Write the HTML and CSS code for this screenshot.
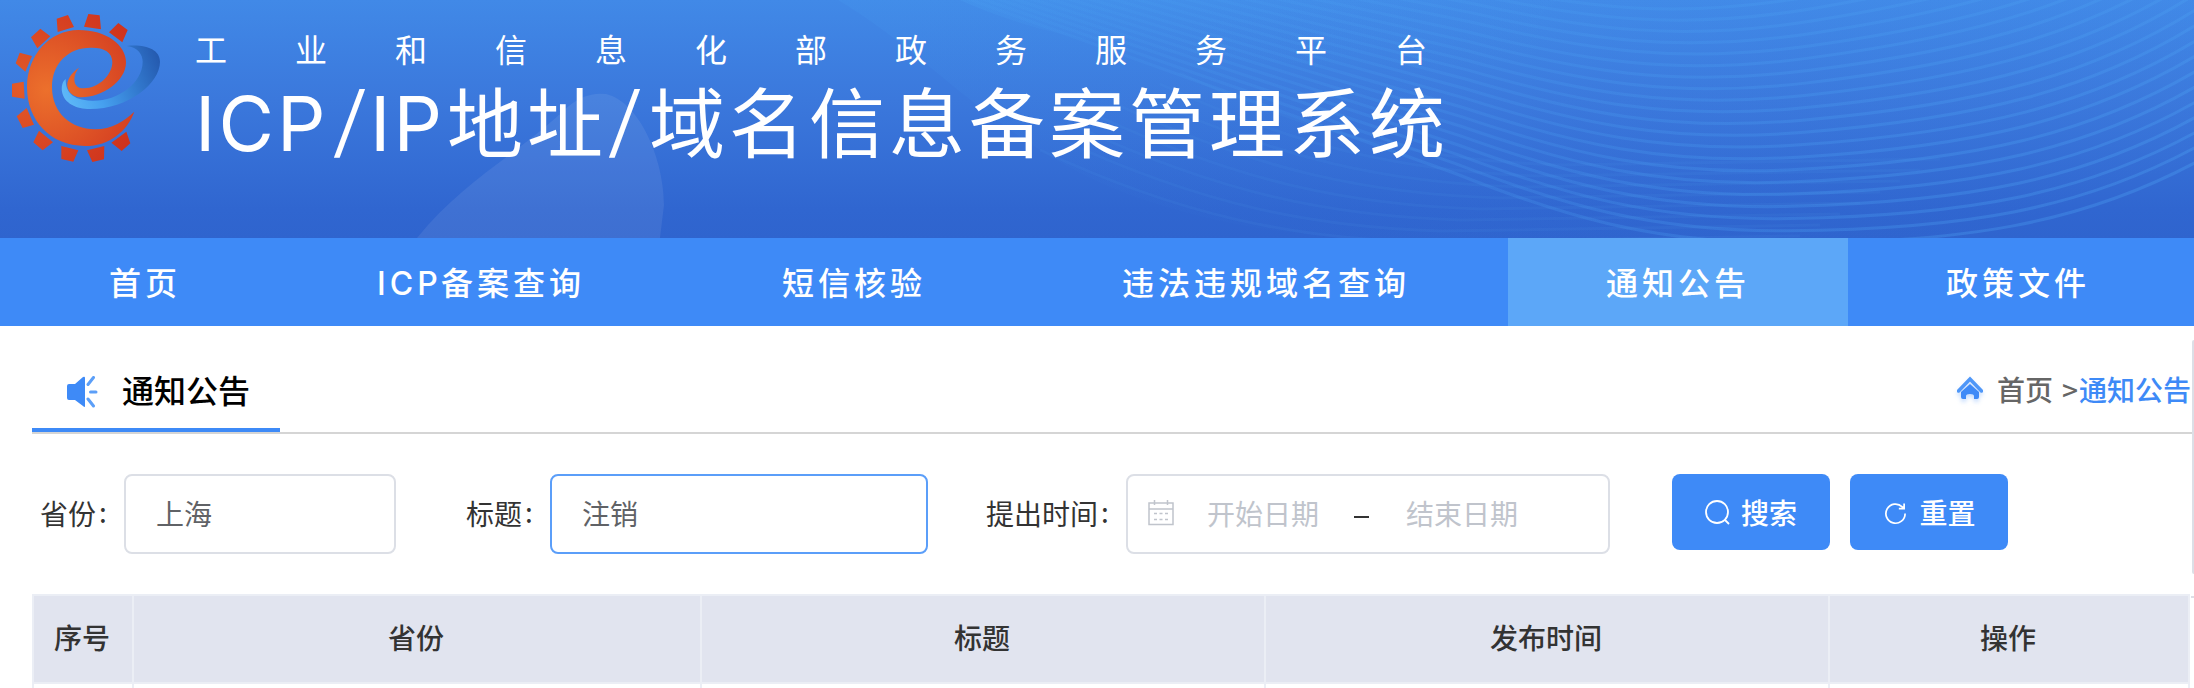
FILE: index.html
```html
<!DOCTYPE html>
<html lang="zh-CN">
<head>
<meta charset="utf-8">
<title>ICP/IP地址/域名信息备案管理系统</title>
<link rel="stylesheet" href="styles.css">
</head>
<body>
<header class="banner">
  <svg class="banner-art" viewBox="0 0 2194 238" preserveAspectRatio="none" aria-hidden="true">
    <defs>
      <linearGradient id="fade" gradientUnits="userSpaceOnUse" x1="940" y1="0" x2="2194" y2="0">
        <stop offset="0" stop-color="#4aa0f2" stop-opacity=".12"/>
        <stop offset=".4" stop-color="#4aa0f2" stop-opacity=".22"/>
        <stop offset="1" stop-color="#4a9cf0" stop-opacity=".38"/>
      </linearGradient>
      <linearGradient id="haze" x1="0" y1="0" x2="1" y2="1">
        <stop offset="0" stop-color="#4aa8f5" stop-opacity=".45"/>
        <stop offset=".45" stop-color="#4aa0f2" stop-opacity=".08"/>
        <stop offset="1" stop-color="#4aa0f2" stop-opacity="0"/>
      </linearGradient>
      <path id="w0" d="M960 -4C1110 50 1290 115 1454 173C1560 215 1650 243 1785 243C1960 243 2080 225 2200 160" fill="none" stroke="url(#fade)" stroke-width="3"/>
      <g id="w1"><use href="#w0"/><use href="#w0" transform="translate(0 -5) rotate(-.5 960 0)"/></g>
      <g id="w2"><use href="#w1"/><use href="#w1" transform="translate(0 -10) rotate(-1 960 0)"/></g>
      <g id="w3"><use href="#w2"/><use href="#w2" transform="translate(0 -20) rotate(-2 960 0)"/></g>
      <g id="w4"><use href="#w3"/><use href="#w3" transform="translate(0 -40) rotate(-4 960 0)"/></g>
      <path id="v0" d="M1040 150C1180 215 1290 238 1420 242L1800 236" fill="none" stroke="#4a9cf0" stroke-opacity=".1" stroke-width="3"/>
      <g id="v1"><use href="#v0"/><use href="#v0" transform="translate(20 -11)"/></g>
      <g id="v2"><use href="#v1"/><use href="#v1" transform="translate(40 -22)"/></g>
    </defs>
    <path d="M417 238C462 182 520 152 562 112Q583 91 606 94C640 102 664 160 664 205L660 238Z" fill="#fff" fill-opacity=".075"/>
    <path d="M838 0C940 60 1010 160 1160 205C1260 235 1330 240 1500 240L1960 240L2194 160V0Z" fill="url(#haze)" opacity=".3"/>
    <path d="M960 0C1060 45 1180 62 1454 70C1600 60 1500 30 1560 0Z" fill="url(#haze)" opacity=".45"/>
    <use href="#v2"/>
    <use href="#v2" transform="translate(80 -44)"/>
    <use href="#w4"/>
    <use href="#w4" transform="translate(0 -80) rotate(-8 960 0)"/>
  </svg>
  <svg class="logo" viewBox="0 0 540 540" aria-label="logo">
    <defs>
      <radialGradient id="orange" gradientUnits="userSpaceOnUse" cx="140" cy="270" r="300">
        <stop offset="0" stop-color="#ec702c"/><stop offset="1" stop-color="#d33c21"/>
      </radialGradient>
      <linearGradient id="blue" gradientUnits="userSpaceOnUse" x1="185" y1="300" x2="480" y2="190">
        <stop offset="0" stop-color="#60baf8"/><stop offset=".35" stop-color="#46a0ef"/><stop offset=".7" stop-color="#337bd0"/><stop offset="1" stop-color="#255bb0"/>
      </linearGradient>
      <radialGradient id="teeth" gradientUnits="userSpaceOnUse" cx="60" cy="260" r="360">
        <stop offset="0" stop-color="#e25a28"/><stop offset="1" stop-color="#cf331d"/>
      </radialGradient>
    </defs>
    <path fill="url(#blue)" d="M197 237C186 245 184 262 186 275C192 310 230 327 270 327C385 327 480 250 480 185C480 145 430 132 380 138C415 142 428 165 428 185C428 250 350 305 275 302C215 300 197 275 197 237Z"/>
    <path fill="url(#orange)" d="M403 335C382 392 330 438 255 438C150 438 81 360 81 262C81 165 150 90 235 90C320 90 378 135 378 187C378 245 305 292 245 292C210 292 195 262 205 240C211 224 224 211 238 203C218 222 215 264 250 265C295 266 337 225 337 187C337 155 310 142 272 143C205 143 156 190 156 262C156 340 215 388 285 388C335 388 375 362 403 335Z"/>
    <path fill="url(#teeth)" d="M170 56L204 45L222 81L173 96ZM265 42L299 46L303 88L252 80ZM355 69L383 90L367 127L327 97ZM121 86L151 109L112 145L93 112ZM59 158L96 168L76 215L47 190ZM36 251L71 245L74 296L36 290ZM80 324L102 374L68 384L50 349ZM117 392L159 427L128 451L100 427ZM184 438L235 451L220 485L184 477ZM313 438L312 478L277 486L261 451ZM379 395L391 430L365 453L334 428Z"/>
  </svg>
  <div class="titles">
    <p class="ministry">工业和信息化部政务服务平台</p>
    <h1 class="system"><span class="latin latin-icp">ICP</span><span class="slash">/</span><span class="latin latin-ip">IP</span><span class="han">地址</span><span class="slash slash-wide">/</span><span class="han">域名信息备案管理系统</span></h1>
  </div>
</header>

<nav class="nav">
  <a class="nav-item">首页</a>
  <a class="nav-item nav-icp"><span class="nav-latin">ICP</span>备案查询</a>
  <a class="nav-item">短信核验</a>
  <a class="nav-item">违法违规域名查询</a>
  <a class="nav-item active">通知公告</a>
  <a class="nav-item">政策文件</a>
</nav>

<main class="main">
  <section class="heading">
    <h2 class="heading-tab">
      <svg class="horn" viewBox="0 0 32 32"><path d="M0 10Q0 8 2 8H8L16 1Q18 0 18 2V30Q18 32 16 30L8 24H2Q0 24 0 22Z" fill="#3e8af7"/><path d="M21 8.500L26.500 1.500M23.500 16H29M21 23L26.500 30" fill="none" stroke="#5c9ff8" stroke-width="3" stroke-linecap="round"/></svg>
      <span class="heading-text">通知公告</span>
    </h2>
    <div class="crumbs">
      <svg class="home" viewBox="0 0 26 30"><path d="M1.500 17L13 5L24.500 17" fill="none" stroke="#4f97f8" stroke-width="3.500" stroke-linecap="round"/><path d="M13 10L22 18V23Q22 25 20 25H17V22Q17 20 13 20T9 22V25H6Q4 25 4 23V18Z" fill="#3e8af7"/></svg>
      <span class="crumb-home">首页</span><span class="crumb-sep">&gt;</span><span class="crumb-now">通知公告</span>
    </div>
  </section>

  <form class="filters">
    <label class="label label-province">省份<span class="colon">:</span></label>
    <div class="field province">上海</div>
    <label class="label label-title">标题<span class="colon">:</span></label>
    <div class="field title-field">注销</div>
    <label class="label label-date">提出时间<span class="colon">:</span></label>
    <div class="field date">
      <svg class="calendar" viewBox="0 0 26 26" fill="none" stroke="#c0c4cc" stroke-width="1.500"><path d="M1 3H25V24.500H1ZM1 9H25M6.500 0V5M19.500 0V5"/><path d="M6 13.500H9M11.500 13.500H14.500M17 13.500H20M6 19.500H9M11.500 19.500H14.500M17 19.500H20"/></svg>
      <span class="hint">开始日期</span><span class="dash"></span><span class="hint">结束日期</span>
    </div>
    <div class="actions">
      <button type="button" class="btn"><svg class="btn-icon search" viewBox="0 0 26 26"><circle cx="12" cy="12" r="11"/><path d="M19.500 19.500L24 24"/></svg>搜索</button>
      <button type="button" class="btn"><svg class="btn-icon reset" viewBox="0 0 24 24"><path d="M22 12A10 10 0 1 1 19 5L20.500 6.500M21 1.500V7H15.500"/></svg>重置</button>
    </div>
  </form>

  <div class="table">
    <div class="th">序号</div><div class="th">省份</div><div class="th">标题</div><div class="th">发布时间</div><div class="th">操作</div>
    <div class="td"></div><div class="td"></div><div class="td"></div><div class="td"></div><div class="td"></div>
  </div>
  <div class="edge"></div>
  <div class="edge-tick"></div>
</main>
</body>
</html>
```

FILE: styles.css
```css
* { box-sizing: border-box; }
body {
  margin: 0;
  width: 2194px;
  height: 688px;
  overflow: hidden;
  background: #fff;
  color: #333;
  font-family: "Noto Sans CJK SC", sans-serif;
  font-size: 28px;
}
h1, h2, p { margin: 0; font-weight: 400; }

.banner {
  position: relative;
  display: flex;
  height: 238px;
  background: linear-gradient(#4189e7, #3b78dc 42%, #3066d0 88%, #2f64ce);
  color: #fff;
}
.banner-art { position: absolute; inset: 0; width: 100%; height: 100%; }
.logo { position: relative; width: 180px; height: 180px; flex: none; }
.titles { position: relative; padding: 25px 0 0 15px; white-space: nowrap; }
.ministry { font-size: 32px; line-height: 47px; letter-spacing: 68px; }
.system { display: flex; margin-top: -1px; font-size: 76px; line-height: 96px; }
.han { letter-spacing: 4px; }
.latin { padding-top: 4px; font-family: Inter, "Liberation Sans", sans-serif; letter-spacing: 3px; }
.latin-icp { width: 137px; }
.slash { width: 38px; transform: translate(1px, -5px) scale(1.12, .93); transform-origin: 0 50%; }
.latin-ip { width: 77px; }
.slash-wide { width: 42px; }

.nav { display: flex; height: 88px; padding-left: 11px; background: #3e8af7; }
.nav-item {
  padding: 0 98px;
  color: #fff;
  font-size: 32px;
  font-weight: 500;
  line-height: 86px;
  letter-spacing: 4px;
  white-space: nowrap;
}
.nav-icp { width: 405px; }
.nav-latin { display: inline-block; width: 64px; font-family: Inter, sans-serif; line-height: 1; }
.nav-item.active { background: #5ca7f8; }

.main { position: relative; padding-left: 32px; }
.heading {
  display: flex;
  justify-content: space-between;
  width: 2160px;
  height: 108px;
  border-bottom: 2px solid #d5d5d5;
}
.heading-tab {
  display: flex;
  align-items: center;
  width: 248px;
  height: 106px;
  padding: 28px 0 0 35px;
  gap: 23px;
  border-bottom: 4px solid #3e8af7;
  color: #000;
  font-size: 32px;
  font-weight: 500;
  white-space: nowrap;
}
.heading-text { padding-bottom: 5px; }
.horn { width: 32px; height: 32px; margin-top: 1px; flex: none; }
.crumbs { display: flex; align-items: center; height: 126px; padding-right: 1px; }
.home { width: 26px; height: 30px; margin-right: 14px; filter: drop-shadow(0 3px 2px rgba(62, 138, 247, .3)); }
.crumb-home, .crumb-sep { color: #666; font-weight: 500; }
.crumb-sep { width: 26px; padding-left: 9px; }
.crumb-now { color: #3e8af7; font-weight: 500; }

.filters { display: flex; height: 160px; padding-top: 40px; }
.label { display: flex; line-height: 79px; white-space: nowrap; }
.colon { margin: -2px 0 0 3px; }
.label-province { width: 92px; padding-left: 8px; }
.label-title { width: 154px; padding-left: 70px; }
.label-date { width: 198px; padding-left: 58px; }
.field {
  display: flex;
  align-items: center;
  height: 80px;
  padding: 0 0 2px 30px;
  border: 2px solid #dcdfe6;
  border-radius: 8px;
  color: #606266;
}
.province { width: 272px; }
.title-field { width: 378px; border-color: #5b9ef9; }
.date { width: 484px; padding-left: 20px; }
.calendar { width: 26px; height: 26px; margin-right: 33px; }
.hint { width: 112px; color: #c0c4cc; }
.dash { width: 15px; height: 2px; margin: 7px 37px 0 35px; background: #333; }
.actions { display: flex; gap: 20px; padding-left: 62px; }
.btn {
  display: flex;
  align-items: center;
  justify-content: center;
  width: 158px;
  height: 76px;
  padding: 0;
  border: 0;
  border-radius: 8px;
  background: #3e8af7;
  color: #fff;
  font: 500 28px "Noto Sans CJK SC", sans-serif;
}
.btn-icon { fill: none; stroke: #fff; stroke-width: 1.8; }
.search { width: 26px; height: 26px; margin: 2px 10px 0 0; }
.reset { width: 23px; height: 23px; margin: 2px 12px 0 2px; }

.table {
  display: grid;
  grid-template-columns: 100px 568px 564px 564px 360px;
  grid-template-rows: 90px 4px;
  width: 2158px;
  border-left: 2px solid #ebeef5;
}
.th {
  display: flex;
  align-items: center;
  justify-content: center;
  padding: 0 2px 5px 0;
  border: 2px solid #ebeef5;
  border-left: 0;
  background: #e1e4ef;
  font-weight: 500;
}
.td { border-right: 2px solid #ebeef5; }

/* Neighbouring panel peeking in at the right edge */
.edge {
  position: absolute;
  right: 0;
  top: 14px;
  width: 2px;
  height: 234px;
  border-radius: 2px 0 0 2px;
  background: #dcdfe6;
}
.edge-tick { position: absolute; right: 0; top: 270px; width: 3px; height: 2px; background: #dcdfe6; }
```
